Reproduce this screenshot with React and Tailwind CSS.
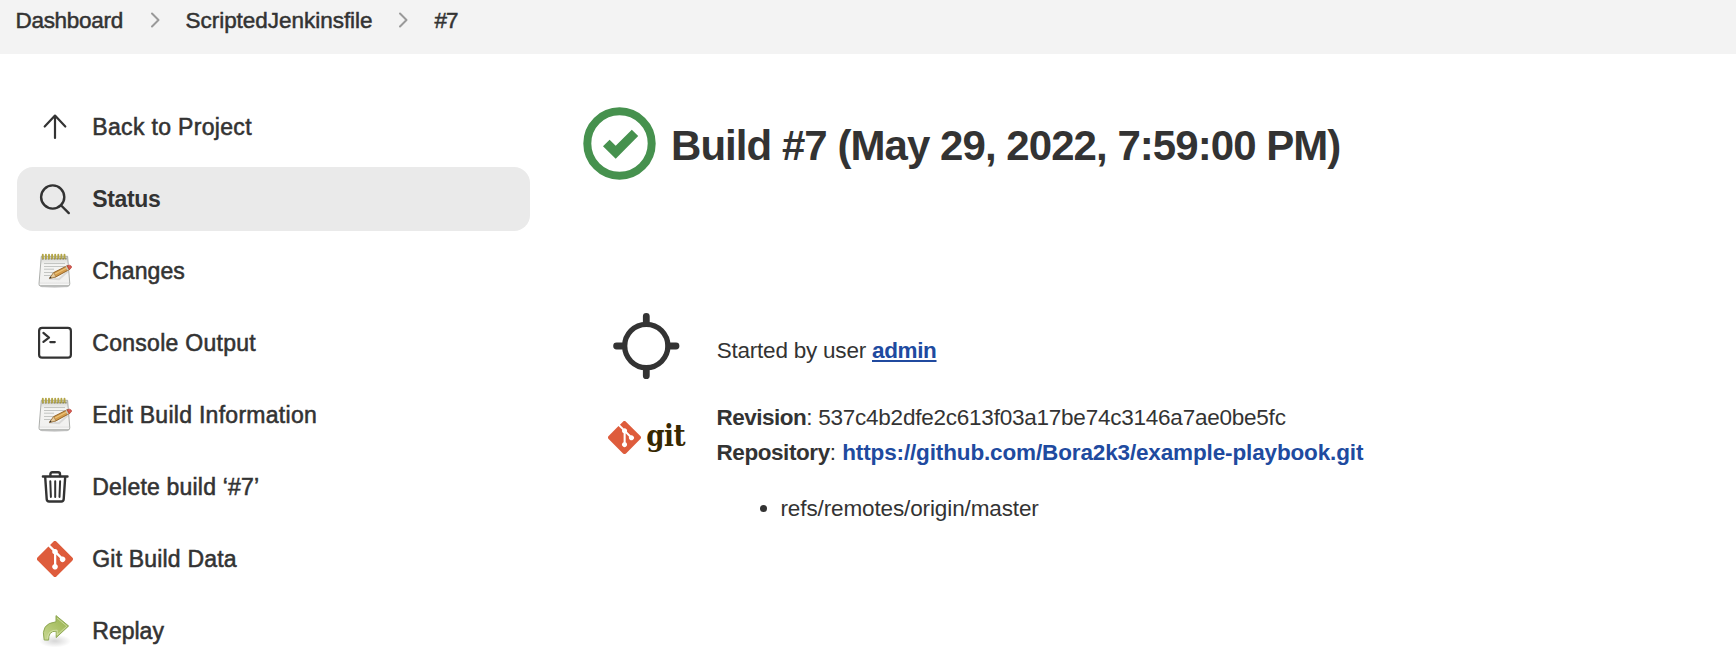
import React from 'react';

const UpIcon = () => (
  <svg className="h-9 w-9" viewBox="0 0 36 36" fill="none" stroke="#333" strokeWidth="2.2" strokeLinecap="round" strokeLinejoin="round">
    <path d="M18 29V7M7.7 17.5L18 6.6l10.3 10.9" />
  </svg>
);

const SearchIcon = () => (
  <svg className="h-9 w-9" viewBox="0 0 36 36" fill="none" stroke="#333" strokeWidth="2.4" strokeLinecap="round">
    <circle cx="15.7" cy="16" r="11.6" />
    <path d="M24.2 24.5l7.6 7.6" />
  </svg>
);

const NotepadIcon = () => (
  <svg className="h-9 w-9" viewBox="0 0 36 36" fill="none">
    <defs>
      <linearGradient id="paper" x1="0" y1="0" x2="0" y2="1">
        <stop offset="0" stopColor="#d2d3cf" />
        <stop offset="0.3" stopColor="#f4f4f2" />
        <stop offset="0.85" stopColor="#f1f1f0" />
        <stop offset="1" stopColor="#d5d5d4" />
      </linearGradient>
    </defs>
    <ellipse cx="17.5" cy="33.4" rx="14.5" ry="1.3" fill="#000" opacity="0.2" />
    <path d="M4.3 3.3h26.3l2.2 27.4q.1 2.2-1.8 2.2H3.6q-1.9 0-1.6-2.2z" fill="url(#paper)" stroke="#a3a5a1" strokeWidth="0.9" />
    <path d="M2.7 31.3h29.4" stroke="#fff" strokeWidth="0.9" />
    <g stroke="#c3c5c2" strokeWidth="1">
      <path d="M7 10.5h21M7 13.5h21M7 16.2h10M7 19.5h20M7 22.5h8" />
    </g>
    <path d="M5 5.6h24.5" stroke="#77766a" strokeWidth="1.6" strokeDasharray="1.7 1.2" />
    <g stroke="#b3a545" strokeWidth="1.9" strokeLinecap="round">
      <path d="M5.8 1.8v3.6M8.9 1.8v3.6M12 1.8v3.6M15.1 1.8v3.6M18.2 1.8v3.6M21.3 1.8v3.6M24.4 1.8v3.6M27.5 1.8v3.6" />
    </g>
    <path d="M12 25.5l10 .8 9-8" stroke="#000" strokeWidth="2" opacity="0.1" />
    <path d="M12.6 25.3l4.1-5.7 13.8-7 2.1 3.8-13.7 7.5z" fill="#d49c4c" stroke="#8c5f25" strokeWidth="0.9" strokeLinejoin="round" />
    <path d="M18 20.9l12-6.2" stroke="#ecc57a" strokeWidth="1.1" />
    <path d="M12.6 25.3l4.1-5.7 2.2 4.3z" fill="#e8cda0" stroke="#8c6a3a" strokeWidth="0.5" />
    <path d="M12.2 25.6l1.3-2 1.1 1.2z" fill="#333" />
    <path d="M29 13.3l2 3.9" stroke="#c8c8c8" strokeWidth="1.3" />
    <path d="M30.2 12.8q2.6-1.4 4 .2t-1.8 3.6z" fill="#da5a51" stroke="#ad3b33" strokeWidth="0.6" />
  </svg>
);

const ConsoleIcon = () => (
  <svg className="h-9 w-9" viewBox="0 0 36 36" fill="none" stroke="#333" strokeWidth="2.2" strokeLinecap="round" strokeLinejoin="round">
    <rect x="2.1" y="2.9" width="31.8" height="29.8" rx="3" />
    <path d="M6.4 7.9l5.6 4.7-5.6 4.2M13.3 17.1h4.5" />
  </svg>
);

const TrashIcon = () => (
  <svg className="h-9 w-9" viewBox="0 0 36 36" fill="none" stroke="#333" strokeWidth="2.4" strokeLinecap="round" strokeLinejoin="round">
    <path d="M5.9 7.5h24.6M8.2 8l1.5 22.2q.2 2.3 2.4 2.3h12.2q2.2 0 2.4-2.3L28.2 8" />
    <path d="M13.4 7V5.2q0-1.9 1.9-1.9h5.8q1.9 0 1.9 1.9V7" />
    <path d="M13.3 12.3l.6 15.6M18.2 12.3v15.6M23.1 12.3l-.6 15.6" strokeWidth="2" />
  </svg>
);

const GitMark = ({ className }) => (
  <svg className={className} viewBox="0 0 92 92">
    <path
      fill="#de5c3c"
      d="M90.156 41.965 50.036 1.848a5.918 5.918 0 0 0-8.372 0l-8.328 8.332 10.566 10.566a7.03 7.03 0 0 1 7.23 1.684 7.034 7.034 0 0 1 1.669 7.277l10.187 10.184a7.028 7.028 0 0 1 7.278 1.672 7.04 7.04 0 0 1 0 9.957 7.05 7.05 0 0 1-9.965 0 7.044 7.044 0 0 1-1.528-7.66l-9.5-9.497V59.36a7.04 7.04 0 0 1 1.86 11.29 7.04 7.04 0 0 1-9.957 0 7.04 7.04 0 0 1 0-9.958 7.06 7.06 0 0 1 2.304-1.539V33.926a7.049 7.049 0 0 1-3.82-9.234L29.242 14.272 1.73 41.777a5.925 5.925 0 0 0 0 8.371L41.852 90.27a5.925 5.925 0 0 0 8.37 0l39.934-39.934a5.925 5.925 0 0 0 0-8.371"
    />
  </svg>
);

const ReplayIcon = () => (
  <svg className="h-9 w-9" viewBox="0 0 36 36" fill="none">
    <defs>
      <radialGradient id="shade">
        <stop offset="0" stopColor="#000" stopOpacity="0.16" />
        <stop offset="1" stopColor="#000" stopOpacity="0" />
      </radialGradient>
      <linearGradient id="leaf" x1="0" y1="1" x2="1" y2="0">
        <stop offset="0" stopColor="#c9d894" />
        <stop offset="0.6" stopColor="#a9c065" />
        <stop offset="1" stopColor="#94ae50" />
      </linearGradient>
    </defs>
    <ellipse cx="18" cy="28" rx="16" ry="6.5" fill="url(#shade)" />
    <path d="M19 2.6L31.6 13 19.2 24.6v-6.4q-8-.4-7.6 8.9L7.2 27Q3 10.5 19 8.8z" fill="url(#leaf)" stroke="#8fa855" strokeWidth="1" strokeLinejoin="round" />
    <path d="M20 5l9.8 8.2-9.6 8.8v-4.8q-9.400-.6-9.600 8.400" stroke="#dce8b5" strokeWidth="0.9" opacity="0.8" />
  </svg>
);

const MEDIUM = '[-webkit-text-stroke:0.55px_#333]';

const items = [
  { label: 'Back to Project', Icon: UpIcon, text: `${MEDIUM} tracking-[0.33px]` },
  { label: 'Status', Icon: SearchIcon, text: 'font-bold tracking-[-0.35px]', active: true },
  { label: 'Changes', Icon: NotepadIcon, text: `${MEDIUM} tracking-[0.08px]` },
  { label: 'Console Output', Icon: ConsoleIcon, text: `${MEDIUM} tracking-[0.28px]` },
  { label: 'Edit Build Information', Icon: NotepadIcon, text: `${MEDIUM} tracking-[0.28px]` },
  { label: 'Delete build ‘#7’', Icon: TrashIcon, text: `${MEDIUM} tracking-[0.2px]` },
  { label: 'Git Build Data', Icon: () => <GitMark className="h-9 w-9" />, text: `${MEDIUM} tracking-[0.18px]` },
  { label: 'Replay', Icon: ReplayIcon, text: MEDIUM },
];

const Chevron = () => (
  <svg className="h-[18px] w-3 shrink-0" viewBox="0 0 12 18" fill="none" stroke="#999" strokeWidth="2" strokeLinecap="round" strokeLinejoin="round">
    <path d="M3 2.5L9.500 9l-6.500 6.500" />
  </svg>
);

export default function App() {
  return (
    <div className="flex h-[660px] w-[1736px] flex-col overflow-hidden bg-white font-['Liberation_Sans',Arial,sans-serif] text-[#333]">
      <nav className="flex h-[54px] shrink-0 items-start bg-[#f3f3f3] pt-[7px] pl-[15.5px] text-[22.5px] leading-[28px] [-webkit-text-stroke:0.5px_#333]">
        <span className="w-[133px] tracking-[-0.3px]">Dashboard</span>
        <span className="flex h-[26px] w-[37px] items-center"><Chevron /></span>
        <span className="w-[211px] tracking-[-0.03px]">ScriptedJenkinsfile</span>
        <span className="flex h-[26px] w-[38px] items-center"><Chevron /></span>
        <span className="tracking-[-1px]">#7</span>
      </nav>

      <div className="flex">
        <aside className="flex w-[530px] shrink-0 flex-col gap-2 pt-[41px] pl-[17px]">
          {items.map(({ label, Icon, text, active }) => (
            <a key={label} className={`flex h-16 shrink-0 items-center rounded-2xl pl-5 ${active ? 'bg-[#eaeaea]' : ''}`}>
              <span className="flex h-9 w-9 shrink-0 items-center justify-center"><Icon /></span>
              <span className={`pl-[19.3px] text-[23px] leading-8 whitespace-nowrap ${text}`}>{label}</span>
            </a>
          ))}
        </aside>

        <main className="pt-[53px] pl-[53px]">
          <div className="flex h-[73px] items-center">
            <svg className="h-[73px] w-[73px] shrink-0" viewBox="0 0 73 73" fill="none">
              <circle cx="36.5" cy="36.5" r="32.2" stroke="#46914e" strokeWidth="8" />
              <path d="M20 39.3l6.6-6.6 6.1 6 16.1-16 6.4 6.4-22.5 22.6z" fill="#46914e" />
            </svg>
            <h1 className="pt-[4px] pl-[15px] text-[42px] leading-[50px] font-bold tracking-[-0.95px] whitespace-nowrap">Build #7 (May 29, 2022, 7:59:00 PM)</h1>
          </div>

          <div className="mt-[132px] flex items-start pl-[29px]">
            <svg className="h-[68px] w-[68px] shrink-0" viewBox="0 0 68 68" fill="none" stroke="#333" strokeLinecap="round">
              <circle cx="34.3" cy="34" r="21.6" strokeWidth="5.3" />
              <path d="M34.3 4.3v7M34.3 56.7v7M4.6 34h7M57 34h7" strokeWidth="6.8" />
            </svg>
            <p className="pt-[23px] pl-[36.7px] text-[22.5px] leading-8 tracking-[-0.22px] whitespace-nowrap">
              Started by user <a className="font-bold tracking-[-0.35px] text-[#204a9f] underline decoration-2 underline-offset-[2px]">admin</a>
            </p>
          </div>

          <div className="mt-[20px] flex items-start pl-[24.5px] text-[22.5px] leading-[35px] whitespace-nowrap">
            <div className="flex w-[109px] shrink-0 items-center pt-[18px]">
              <GitMark className="h-[33px] w-[33px]" />
              <span className="origin-left scale-x-[0.87] pb-[3px] pl-[6px] font-['DejaVu_Serif',serif] text-[30px] leading-[36px] font-bold tracking-[-0.5px] text-[#362701]">git</span>
            </div>
            <div>
              <p className="tracking-[-0.23px]"><b className="tracking-[-0.52px]">Revision</b>: 537c4b2dfe2c613f03a17be74c3146a7ae0be5fc</p>
              <p><b className="tracking-[-0.43px]">Repository</b>: <a className="font-bold tracking-[-0.14px] text-[#204a9f]">https://github.com/Bora2k3/example-playbook.git</a></p>
              <ul className="mt-[21px] flex items-center pl-[43px]">
                <li className="flex items-center gap-[14px] tracking-[-0.12px]">
                  <span className="h-[7px] w-[7px] rounded-full bg-[#333]" />
                  refs/remotes/origin/master
                </li>
              </ul>
            </div>
          </div>
        </main>
      </div>
    </div>
  );
}
